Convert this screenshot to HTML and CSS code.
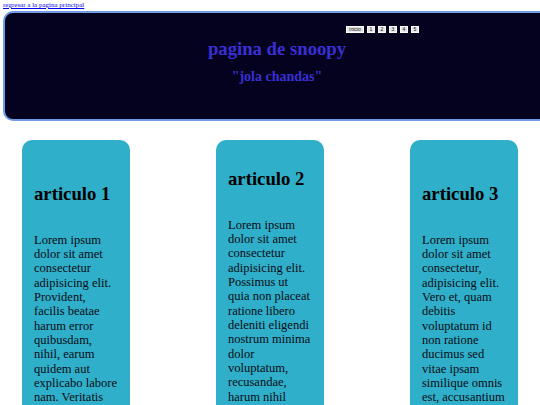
FILE: index.html
```html
<!DOCTYPE html>
<html lang="es">
<head>
<meta charset="utf-8">
<title>pagina de snoopy</title>
<link rel="stylesheet" href="styles.css">
</head>
<body>
<div class="page">
  <a class="back" href="#">regresar a la pagina principal</a>
  <header class="hero">
    <nav class="nav">
      <span class="btn btn-wide">inicio</span>
      <span class="btn">1</span>
      <span class="btn">2</span>
      <span class="btn">3</span>
      <span class="btn">4</span>
      <span class="btn">5</span>
    </nav>
    <h1 class="title">pagina de snoopy</h1>
    <p class="tagline">"jola chandas"</p>
  </header>
  <main class="cards">
    <article class="card">
      <h3 class="card-title">articulo 1</h3>
      <p class="card-text">Lorem ipsum dolor sit amet consectetur adipisicing elit. Provident, facilis beatae harum error quibusdam, nihil, earum quidem aut explicabo labore nam. Veritatis rerum saepe voluptates quos.</p>
    </article>
    <article class="card card-high">
      <h3 class="card-title">articulo 2</h3>
      <p class="card-text">Lorem ipsum dolor sit amet consectetur adipisicing elit. Possimus ut quia non placeat ratione libero deleniti eligendi nostrum minima dolor voluptatum, recusandae, harum nihil dolores quas.</p>
    </article>
    <article class="card">
      <h3 class="card-title">articulo 3</h3>
      <p class="card-text">Lorem ipsum dolor sit amet consectetur, adipisicing elit. Vero et, quam debitis voluptatum id non ratione ducimus sed vitae ipsam similique omnis est, accusantium nobis.</p>
    </article>
  </main>
</div>
</body>
</html>
```
FILE: styles.css
```css
html, body {
  margin: 0;
  padding: 0;
  overflow: hidden;
  background: #ffffff;
  font-family: "Liberation Serif", "Times New Roman", serif;
}

.page {
  padding: 0 3px;
  width: 534px;
  height: 405px;
}

.back {
  display: block;
  font-size: 7px;
  line-height: 8px;
  color: #0000ee;
  text-decoration: underline;
  margin: 1px 0 0 0;
}

.hero {
  box-sizing: border-box;
  width: 548px;
  height: 110px;
  margin-top: 2px;
  background: #05021f;
  border: 2px solid #6f9ce4;
  border-radius: 10px;
  display: flex;
  flex-direction: column;
  align-items: center;
}

.nav {
  align-self: flex-start;
  display: flex;
  gap: 3px;
  margin: 13px 0 0 341px;
  height: 7px;
}

.btn {
  box-sizing: border-box;
  width: 8px;
  height: 7px;
  background: #e6e6e6;
  border: 1px solid #ffffff;
  font-family: "Liberation Sans", Arial, sans-serif;
  font-size: 5px;
  line-height: 5px;
  text-align: center;
  color: #111;
}

.btn-wide {
  width: 18px;
}

.title {
  margin: 5px 0 0 0;
  font-size: 18.72px;
  line-height: 21.5px;
  font-weight: bold;
  color: #3a2fd4;
}

.tagline {
  margin: 9px 0 0 0;
  font-size: 14px;
  line-height: 16px;
  font-weight: bold;
  color: #3a2fd4;
}

.cards {
  display: flex;
  justify-content: space-between;
  padding: 0 19px;
  margin-top: 19px;
}

.card {
  box-sizing: border-box;
  width: 108px;
  height: 300px;
  background: #2fafc9;
  border-radius: 10px;
  padding: 43px 12px 0 12px;
  color: #0b0b14;
}

.card-high {
  padding-top: 28px;
}

.card-title {
  margin: 0;
  font-size: 18.72px;
  line-height: 21.5px;
  font-weight: bold;
  color: #000;
}

.card-text {
  margin: 28px 0 0 0;
  font-size: 12.5px;
  line-height: 14.35px;
}
```
